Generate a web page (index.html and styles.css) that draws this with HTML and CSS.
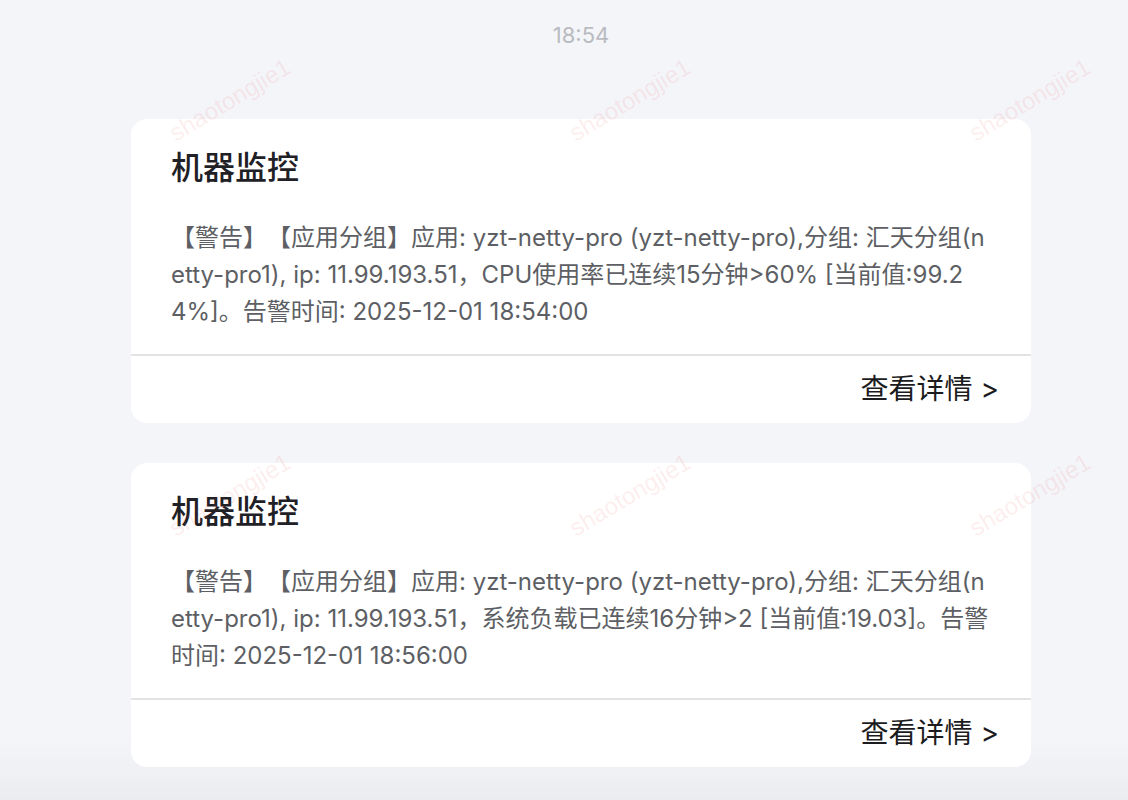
FILE: index.html
```html
<!DOCTYPE html>
<html lang="zh-CN">
<head>
  <meta charset="UTF-8" />
  <meta name="viewport" content="width=device-width, initial-scale=1.0" />
  <title>机器监控</title>
  <link rel="stylesheet" href="styles.css">
</head>
<body>
  <div class="chat">
    <div class="time">18:54</div>

    <div class="card">
      <div class="card-main">
        <h3 class="card-title">机器监控</h3>
        <p class="card-text">【警告】【应用分组】应用: yzt-netty-pro (yzt-netty-pro),分组: 汇天分组(netty-pro1), ip: 11.99.193.51，CPU使用率已连续15分钟&gt;60% [当前值:99.24%]。告警时间: 2025-12-01 18:54:00</p>
      </div>
      <div class="card-foot">查看详情 &gt;</div>
    </div>

    <div class="card">
      <div class="card-main">
        <h3 class="card-title">机器监控</h3>
        <p class="card-text">【警告】【应用分组】应用: yzt-netty-pro (yzt-netty-pro),分组: 汇天分组(netty-pro1), ip: 11.99.193.51，系统负载已连续16分钟&gt;2 [当前值:19.03]。告警时间: 2025-12-01 18:56:00</p>
      </div>
      <div class="card-foot">查看详情 &gt;</div>
    </div>
  </div>

  <!-- watermark layer -->
  <div class="watermarks">
    <div class="wm"><span>shaotongjie1</span></div>
    <div class="wm"><span>shaotongjie1</span></div>
    <div class="wm"><span>shaotongjie1</span></div>
    <div class="wm"><span>shaotongjie1</span></div>
    <div class="wm"><span>shaotongjie1</span></div>
    <div class="wm"><span>shaotongjie1</span></div>
  </div>
</body>
</html>
```

FILE: styles.css
```css
/* Chat message cards */
body {
  margin: 0;
  min-height: 100vh;
  overflow: hidden;
  font-family: Inter, "Noto Sans CJK SC", sans-serif;
  background: linear-gradient(to bottom, #f4f5f9 0, #f4f5f9 740px, #eaecf0 800px);
  text-spacing-trim: space-all;
}
.chat {
  padding: 20px 97px 0 131px;
}
.time {
  text-align: center;
  font-size: 22px;
  line-height: 30px;
  color: #b9bbc0;
  margin-bottom: 69px;
}
.card {
  background: #fff;
  border-radius: 16px;
  margin-bottom: 40px;
}
.card-main { padding: 29px 40px 24px; }
.card-title {
  margin: 0 0 31px;
  font-size: 32px;
  line-height: 40px;
  font-weight: 500;
  color: #1f2126;
}
.card-text {
  margin: 0;
  font-size: 24px;
  line-height: 37px;
  color: #5d5f64;
  word-break: break-all;
}
.card-foot {
  border-top: 2px solid #e3e3e3;
  height: 69px;
  box-sizing: border-box;
  display: flex;
  align-items: center;
  justify-content: flex-end;
  padding: 0 32px 6px 0;
  font-size: 28px;
  color: #1c1c1e;
}
.watermarks {
  position: fixed;
  top: -98px;
  left: 30px;
  display: grid;
  grid-template-columns: repeat(3, 400px);
  grid-auto-rows: 395px;
  pointer-events: none;
}
.wm {
  display: flex;
  align-items: center;
  justify-content: center;
}
.wm span {
  transform: rotate(-31deg);
  font-family: "Liberation Sans", Arial, sans-serif;
  font-size: 24px;
  color: rgba(232, 70, 70, 0.09);
}
```
